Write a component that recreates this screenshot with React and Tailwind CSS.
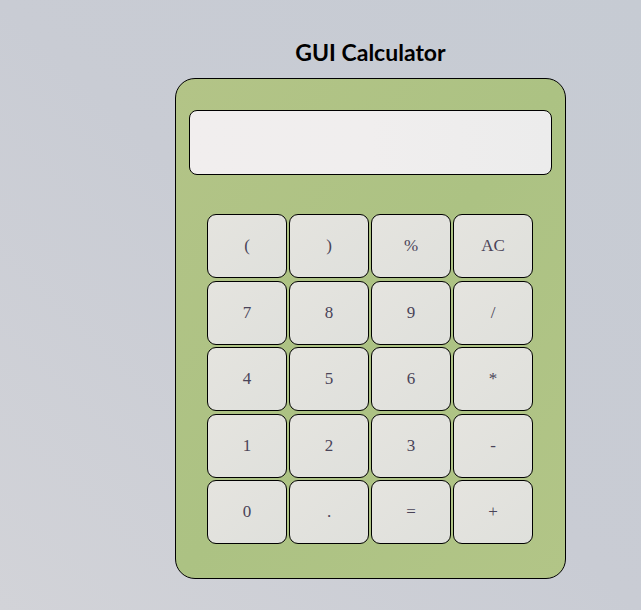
const keys = ['(', ')', '%', 'AC', '7', '8', '9', '/', '4', '5', '6', '*', '1', '2', '3', '-', '0', '.', '=', '+'];

export default function App() {
  return (
    <div className="min-h-screen w-full bg-gradient-to-tr from-[#d2d3d8] via-[#c9ccd4] to-[#c6cbd3] pt-[37px]">
      <div className="ml-[175px] w-[391px]">
        <h1 className="text-center text-[23px] font-bold leading-[30px] text-black font-['Lato','Carlito',sans-serif]">
          GUI Calculator
        </h1>
        <div className="mt-[11px] h-[501px] rounded-[20px] border border-black bg-gradient-to-br from-[#b3c487] via-[#acc283] to-[#b2c587] px-[13px] pt-[31px]">
          <div className="h-[65px] w-[363px] rounded-[8px] border border-black bg-gradient-to-r from-[#f1eeee] via-[#f0eeee] to-[#ececec]" />
          <div className="mt-[39px] ml-[18px] grid w-[326px] grid-cols-4 gap-x-[2px] gap-y-[2.5px]">
            {keys.map((k) => (
              <button
                key={k}
                type="button"
                className="flex h-[64px] w-[80px] items-center justify-center rounded-[9px] border border-black bg-gradient-to-br from-[#e5e4df] to-[#dfe0dc] text-[17px] text-[#4a4458] font-['Liberation_Serif',serif]"
              >
                {k}
              </button>
            ))}
          </div>
        </div>
      </div>
    </div>
  );
}
